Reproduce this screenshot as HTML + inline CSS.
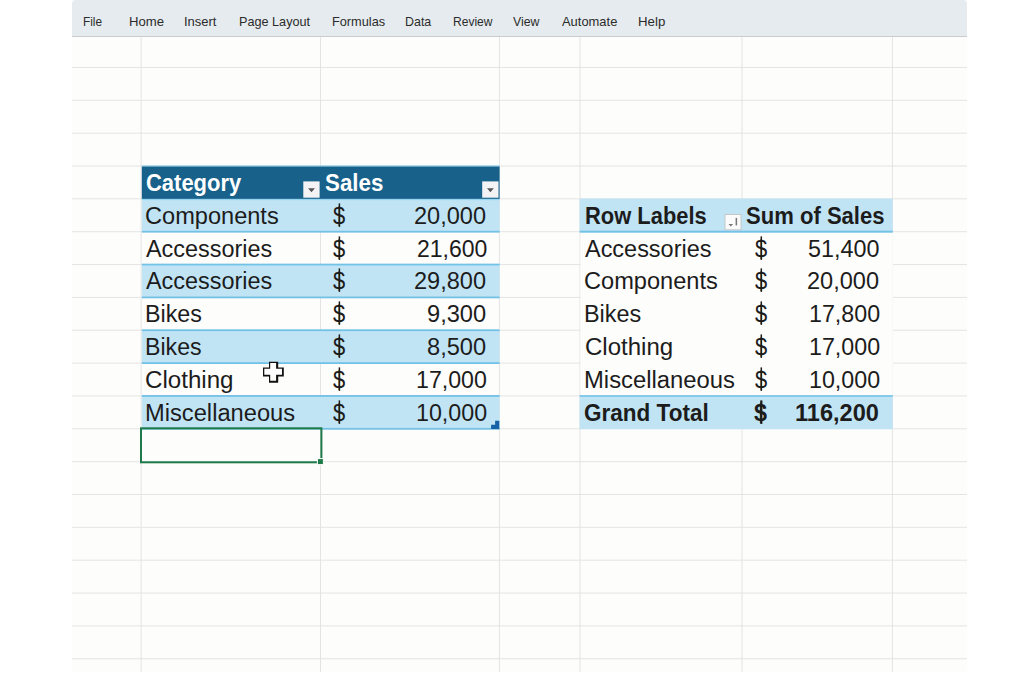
<!DOCTYPE html><html><head><meta charset="utf-8"><title>Excel</title><style>
html,body{margin:0;padding:0;background:#fff;}
body{width:1023px;height:680px;position:relative;overflow:hidden;font-family:"Liberation Sans",sans-serif;}
#app{position:absolute;left:72px;top:0;width:895px;height:671.8px;background:#fdfdfb;overflow:hidden;}
#rib{position:absolute;left:0;top:0;width:895px;height:36px;background:#e6ebef;border-bottom:1px solid #c9cbcc;border-radius:4px 4px 0 0;}
#rib span{position:absolute;top:15px;font-size:12.6px;color:#2b2b2b;line-height:14px;white-space:nowrap;transform-origin:0 50%;}
#g{position:absolute;left:-72px;top:0;}
.t{position:absolute;font-size:23.5px;line-height:33px;height:33px;color:#1c1c1c;white-space:nowrap;transform-origin:0 50%;}
.b{font-weight:bold;}
.w{color:#fff;}
</style></head><body>
<div id="app">
<svg id="g" width="1023" height="680" viewBox="0 0 1023 680">
<rect x="140.60" y="37.00" width="1.00" height="643.00" fill="#e4e4e4"/>
<rect x="320.00" y="37.00" width="1.00" height="643.00" fill="#e4e4e4"/>
<rect x="498.90" y="37.00" width="1.00" height="643.00" fill="#e4e4e4"/>
<rect x="579.50" y="37.00" width="1.00" height="643.00" fill="#e4e4e4"/>
<rect x="741.50" y="37.00" width="1.00" height="643.00" fill="#e4e4e4"/>
<rect x="891.90" y="37.00" width="1.00" height="643.00" fill="#e4e4e4"/>
<rect x="72.00" y="66.95" width="895.00" height="1.00" fill="#e4e4e4"/>
<rect x="72.00" y="99.80" width="895.00" height="1.00" fill="#e4e4e4"/>
<rect x="72.00" y="132.65" width="895.00" height="1.00" fill="#e4e4e4"/>
<rect x="72.00" y="165.50" width="895.00" height="1.00" fill="#e4e4e4"/>
<rect x="72.00" y="198.35" width="895.00" height="1.00" fill="#e4e4e4"/>
<rect x="72.00" y="231.20" width="895.00" height="1.00" fill="#e4e4e4"/>
<rect x="72.00" y="264.05" width="895.00" height="1.00" fill="#e4e4e4"/>
<rect x="72.00" y="296.90" width="895.00" height="1.00" fill="#e4e4e4"/>
<rect x="72.00" y="329.75" width="895.00" height="1.00" fill="#e4e4e4"/>
<rect x="72.00" y="362.60" width="895.00" height="1.00" fill="#e4e4e4"/>
<rect x="72.00" y="395.45" width="895.00" height="1.00" fill="#e4e4e4"/>
<rect x="72.00" y="428.30" width="895.00" height="1.00" fill="#e4e4e4"/>
<rect x="72.00" y="461.15" width="895.00" height="1.00" fill="#e4e4e4"/>
<rect x="72.00" y="494.00" width="895.00" height="1.00" fill="#e4e4e4"/>
<rect x="72.00" y="526.85" width="895.00" height="1.00" fill="#e4e4e4"/>
<rect x="72.00" y="559.70" width="895.00" height="1.00" fill="#e4e4e4"/>
<rect x="72.00" y="592.55" width="895.00" height="1.00" fill="#e4e4e4"/>
<rect x="72.00" y="625.40" width="895.00" height="1.00" fill="#e4e4e4"/>
<rect x="72.00" y="658.25" width="895.00" height="1.00" fill="#e4e4e4"/>
<rect x="141.80" y="166.30" width="357.80" height="32.85" fill="#17618a"/>
<rect x="141.80" y="198.85" width="357.80" height="32.85" fill="#c1e4f5"/>
<rect x="141.80" y="264.55" width="357.80" height="32.85" fill="#c1e4f5"/>
<rect x="141.80" y="330.25" width="357.80" height="32.85" fill="#c1e4f5"/>
<rect x="141.80" y="395.95" width="357.80" height="32.85" fill="#c1e4f5"/>
<rect x="141.80" y="199.15" width="357.80" height="1.00" fill="#8fd3f0"/>
<rect x="141.80" y="230.80" width="357.80" height="1.80" fill="#72c1e6"/>
<rect x="141.80" y="263.65" width="357.80" height="1.80" fill="#72c1e6"/>
<rect x="141.80" y="296.50" width="357.80" height="1.80" fill="#72c1e6"/>
<rect x="141.80" y="329.35" width="357.80" height="1.80" fill="#72c1e6"/>
<rect x="141.80" y="362.20" width="357.80" height="1.80" fill="#72c1e6"/>
<rect x="141.80" y="395.05" width="357.80" height="1.80" fill="#72c1e6"/>
<rect x="141.80" y="427.90" width="357.80" height="1.80" fill="#72c1e6"/>
<rect x="141.80" y="165.50" width="357.80" height="0.90" fill="#79c6e6"/>
<rect x="303.30" y="181.40" width="16.30" height="16.30" fill="#f3f3f5"/>
<path d="M308.10 188.2 L314.90 188.2 L311.50 192.2 Z" fill="#555"/>
<rect x="482.20" y="181.40" width="16.30" height="16.30" fill="#f3f3f5"/>
<path d="M487.00 188.2 L493.80 188.2 L490.40 192.2 Z" fill="#555"/>
<path d="M495.1 420.7 H499.3 V429 H491.1 V424.8 H495.1 Z" fill="#1563a6"/>
<rect x="580.50" y="231.70" width="312.30" height="164.25" fill="#fdfdfb"/>
<rect x="579.60" y="198.55" width="313.20" height="33.15" fill="#c1e4f5"/>
<rect x="579.60" y="230.70" width="313.20" height="2.00" fill="#72c1e6"/>
<rect x="579.60" y="395.95" width="313.20" height="33.15" fill="#c1e4f5"/>
<rect x="579.60" y="395.15" width="313.20" height="1.60" fill="#72c1e6"/>
<rect x="725" y="214.5" width="16" height="15.3" fill="#fbfbfb" stroke="#c4c8cb" stroke-width="1"/>
<path d="M728.5 224 L733.1 224 L730.8 226.5 Z" fill="#777"/>
<rect x="735.60" y="217.90" width="1.50" height="7.50" fill="#777"/>
<rect x="338.65" y="203.40" width="1.50" height="23.50" fill="#1c1c1c"/>
<rect x="338.65" y="236.40" width="1.50" height="23.50" fill="#1c1c1c"/>
<rect x="338.65" y="268.40" width="1.50" height="23.50" fill="#1c1c1c"/>
<rect x="338.65" y="301.40" width="1.50" height="23.50" fill="#1c1c1c"/>
<rect x="338.65" y="334.40" width="1.50" height="23.50" fill="#1c1c1c"/>
<rect x="338.65" y="367.40" width="1.50" height="23.50" fill="#1c1c1c"/>
<rect x="338.65" y="400.40" width="1.50" height="23.50" fill="#1c1c1c"/>
<rect x="760.55" y="236.40" width="1.50" height="23.50" fill="#1c1c1c"/>
<rect x="760.55" y="268.40" width="1.50" height="23.50" fill="#1c1c1c"/>
<rect x="760.55" y="301.40" width="1.50" height="23.50" fill="#1c1c1c"/>
<rect x="760.55" y="334.40" width="1.50" height="23.50" fill="#1c1c1c"/>
<rect x="760.55" y="367.40" width="1.50" height="23.50" fill="#1c1c1c"/>
<rect x="760.20" y="400.40" width="2.20" height="23.50" fill="#1c1c1c"/>
<rect x="141" y="428.3" width="180.4" height="34" fill="none" stroke="#1f7a49" stroke-width="2"/>
<rect x="317.4" y="458.6" width="6" height="6" fill="#1f7a49" stroke="#fdfdfb" stroke-width="1"/>
<path d="M269 361.7 H278.2 V367.6 H283.8 V376.6 H278.2 V382.8 H269 V376.6 H263 V367.6 H269 Z" fill="#111"/>
<path d="M270.2 363 H276.1 V368.8 H282 V374.8 H276.1 V380.7 H270.2 V374.8 H264.3 V368.8 H270.2 Z" fill="#fff"/>
</svg>
<div id="rib">
<span style="left:10.96px;transform:scaleX(0.9404)">File</span>
<span style="left:56.84px;transform:scaleX(1.0425)">Home</span>
<span style="left:111.93px;transform:scaleX(1.0311)">Insert</span>
<span style="left:166.60px;transform:scaleX(1.0050)">Page Layout</span>
<span style="left:259.79px;transform:scaleX(1.0119)">Formulas</span>
<span style="left:333.11px;transform:scaleX(0.9873)">Data</span>
<span style="left:381.35px;transform:scaleX(0.9565)">Review</span>
<span style="left:441.00px;transform:scaleX(0.9782)">View</span>
<span style="left:489.89px;transform:scaleX(1.0265)">Automate</span>
<span style="left:566.17px;transform:scaleX(1.0528)">Help</span>
</div>
<div class="t b w" style="left:73.76px;top:167px;transform:scaleX(0.9347)">Category</div>
<div class="t b w" style="left:252.89px;top:167px;transform:scaleX(0.9493)">Sales</div>
<div class="t" style="left:72.84px;top:200px;transform:scaleX(1.0034)">Components</div>
<div class="t" style="left:74.10px;top:233px;transform:scaleX(0.9964)">Accessories</div>
<div class="t" style="left:74.10px;top:265px;transform:scaleX(0.9964)">Accessories</div>
<div class="t" style="left:73.31px;top:298px;transform:scaleX(0.9893)">Bikes</div>
<div class="t" style="left:73.32px;top:331px;transform:scaleX(0.9847)">Bikes</div>
<div class="t" style="left:72.93px;top:364px;transform:scaleX(1.0263)">Clothing</div>
<div class="t" style="left:73.29px;top:397px;transform:scaleX(1.0082)">Miscellaneous</div>
<div class="t" style="left:260.90px;top:200px;transform:scaleX(0.9340)">$</div>
<div class="t" style="left:260.90px;top:233px;transform:scaleX(0.9340)">$</div>
<div class="t" style="left:260.90px;top:265px;transform:scaleX(0.9340)">$</div>
<div class="t" style="left:260.90px;top:298px;transform:scaleX(0.9340)">$</div>
<div class="t" style="left:260.90px;top:331px;transform:scaleX(0.9340)">$</div>
<div class="t" style="left:260.90px;top:364px;transform:scaleX(0.9340)">$</div>
<div class="t" style="left:260.90px;top:397px;transform:scaleX(0.9340)">$</div>
<div class="t" style="left:342.45px;top:200px;transform:scaleX(1.0022)">20,000</div>
<div class="t" style="left:344.67px;top:233px;transform:scaleX(0.9794)">21,600</div>
<div class="t" style="left:342.45px;top:265px;transform:scaleX(1.0022)">29,800</div>
<div class="t" style="left:355.40px;top:298px;transform:scaleX(1.0054)">9,300</div>
<div class="t" style="left:355.40px;top:331px;transform:scaleX(1.0054)">8,500</div>
<div class="t" style="left:344.18px;top:364px;transform:scaleX(0.9863)">17,000</div>
<div class="t" style="left:344.17px;top:397px;transform:scaleX(0.9892)">10,000</div>
<div class="t b" style="left:512.71px;top:200px;transform:scaleX(0.9321)">Row Labels</div>
<div class="t b" style="left:673.97px;top:200px;transform:scaleX(0.9387)">Sum of Sales</div>
<div class="t" style="left:512.70px;top:233px;transform:scaleX(0.9980)">Accessories</div>
<div class="t" style="left:511.74px;top:265px;transform:scaleX(1.0042)">Components</div>
<div class="t" style="left:512.10px;top:298px;transform:scaleX(0.9964)">Bikes</div>
<div class="t" style="left:512.53px;top:331px;transform:scaleX(1.0227)">Clothing</div>
<div class="t" style="left:512.08px;top:364px;transform:scaleX(1.0137)">Miscellaneous</div>
<div class="t" style="left:683.23px;top:233px;transform:scaleX(0.9340)">$</div>
<div class="t" style="left:683.23px;top:265px;transform:scaleX(0.9340)">$</div>
<div class="t" style="left:683.23px;top:298px;transform:scaleX(0.9340)">$</div>
<div class="t" style="left:683.23px;top:331px;transform:scaleX(0.9340)">$</div>
<div class="t" style="left:683.23px;top:364px;transform:scaleX(0.9340)">$</div>
<div class="t" style="left:735.91px;top:233px;transform:scaleX(0.9929)">51,400</div>
<div class="t" style="left:735.34px;top:265px;transform:scaleX(1.0022)">20,000</div>
<div class="t" style="left:736.67px;top:298px;transform:scaleX(0.9892)">17,800</div>
<div class="t" style="left:736.67px;top:331px;transform:scaleX(0.9892)">17,000</div>
<div class="t" style="left:736.67px;top:364px;transform:scaleX(0.9892)">10,000</div>
<div class="t b" style="left:512.34px;top:397px;transform:scaleX(0.9583)">Grand Total</div>
<div class="t b" style="left:682.44px;top:397px;transform:scaleX(0.9963)">$</div>
<div class="t b" style="left:723.39px;top:397px;transform:scaleX(1.0032)">116,200</div>
</div>
</body></html>
